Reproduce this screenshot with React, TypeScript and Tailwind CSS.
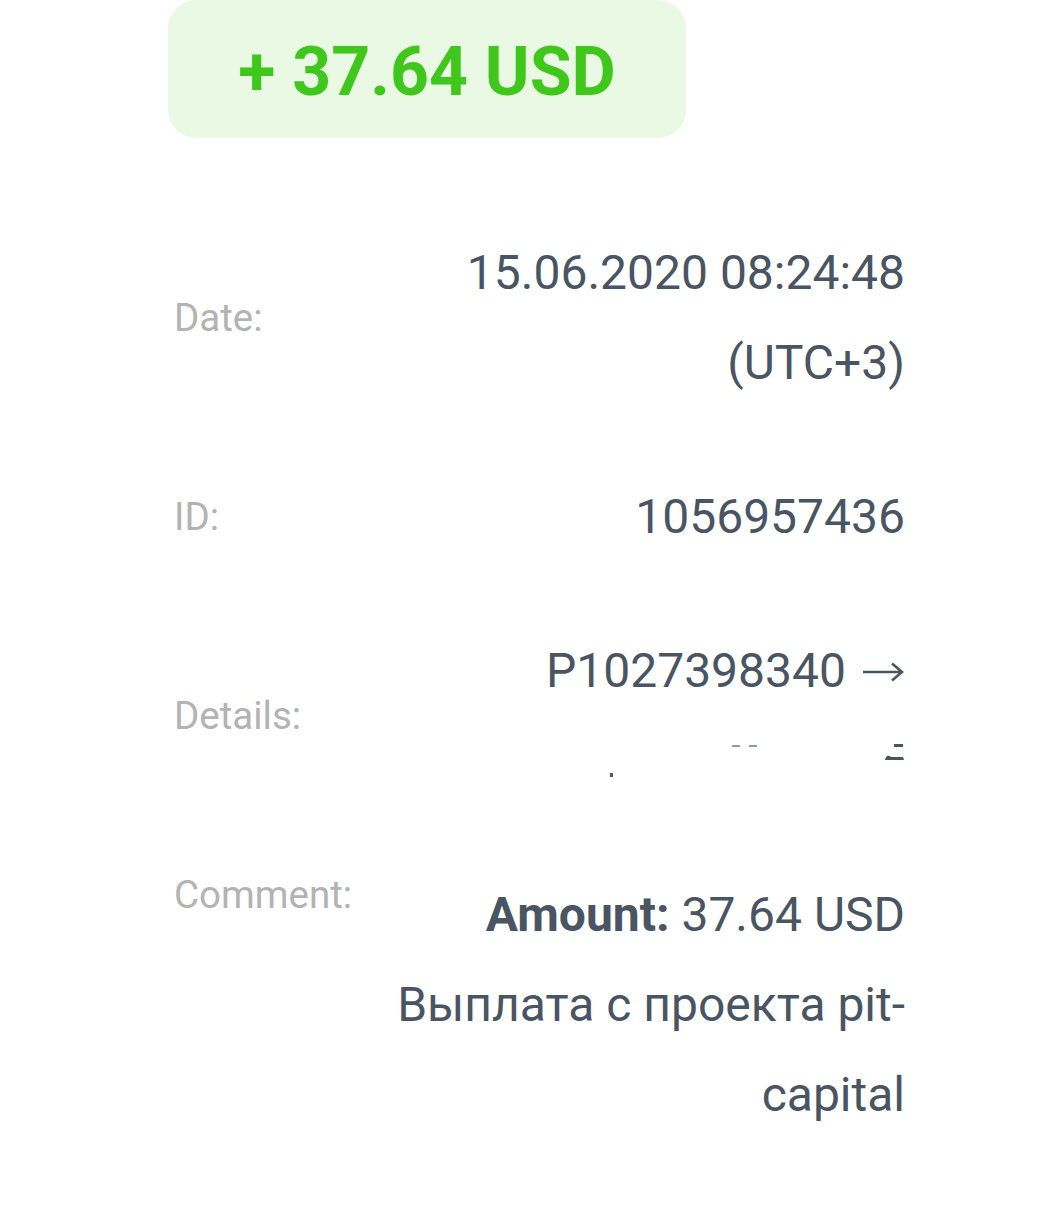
import React from 'react';

function Row({ label, top, children }: { label: string; top?: boolean; children: React.ReactNode }) {
  return (
    <div className={top ? 'flex items-start justify-between' : 'flex items-center justify-between'}>
      <div className="pl-[6px] text-[38.5px] leading-[50px] text-[#b3b3b3]">{label}</div>
      <div className="w-[520px] text-right text-[48px] leading-[90px] text-[#4a5563]">{children}</div>
    </div>
  );
}

export default function App() {
  return (
    <div className="min-h-screen bg-white font-['Roboto',sans-serif]">
      <div className="ml-[168px] w-[737px]">
        {/* amount badge */}
        <div className="flex h-[138px] w-[518px] items-center justify-center rounded-[28px] bg-[#e9f9e4] pt-[6px] text-[68px] font-bold text-[#3fc71c]">
          + 37.64 USD
        </div>

        <div className="mt-[90px] flex flex-col gap-[64px]">
          <Row label="Date:">15.06.2020 08:24:48 (UTC+3)</Row>
          <Row label="ID:">1056957436</Row>
          <Row label="Details:">
            <div className="flex items-center justify-end">
              <span>P1027398340</span>
              <svg className="ml-[15px] mt-[2px]" width="44" height="24" viewBox="0 0 44 24">
                <path d="M2 12 H40 M31 3.5 L41 12 L31 20.5" fill="none" stroke="#4a5563" strokeWidth="2.6" strokeLinecap="butt" />
              </svg>
            </div>
            {/* redacted recipient, only specks left */}
            <div className="flex h-[90px] justify-end">
              <svg width="320" height="90" viewBox="0 0 320 90">
                <rect x="25" y="57" width="3" height="4" fill="#4a5563" />
                <rect x="147" y="29" width="8" height="2" fill="#4a5563" opacity="0.6" />
                <rect x="164" y="29" width="8" height="2" fill="#4a5563" opacity="0.6" />
                <rect x="309" y="28" width="9" height="3" fill="#4a5563" />
                <path d="M300 44 C301 39 304 39 306 41 L318 41 L319 44 Z" fill="#4a5563" />
              </svg>
            </div>
          </Row>
          <Row label="Comment:" top>
            <div>
              <span className="font-bold">Amount:</span> 37.64 USD
            </div>
            <div>Выплата с проекта pit-capital</div>
          </Row>
        </div>
      </div>
    </div>
  );
}
